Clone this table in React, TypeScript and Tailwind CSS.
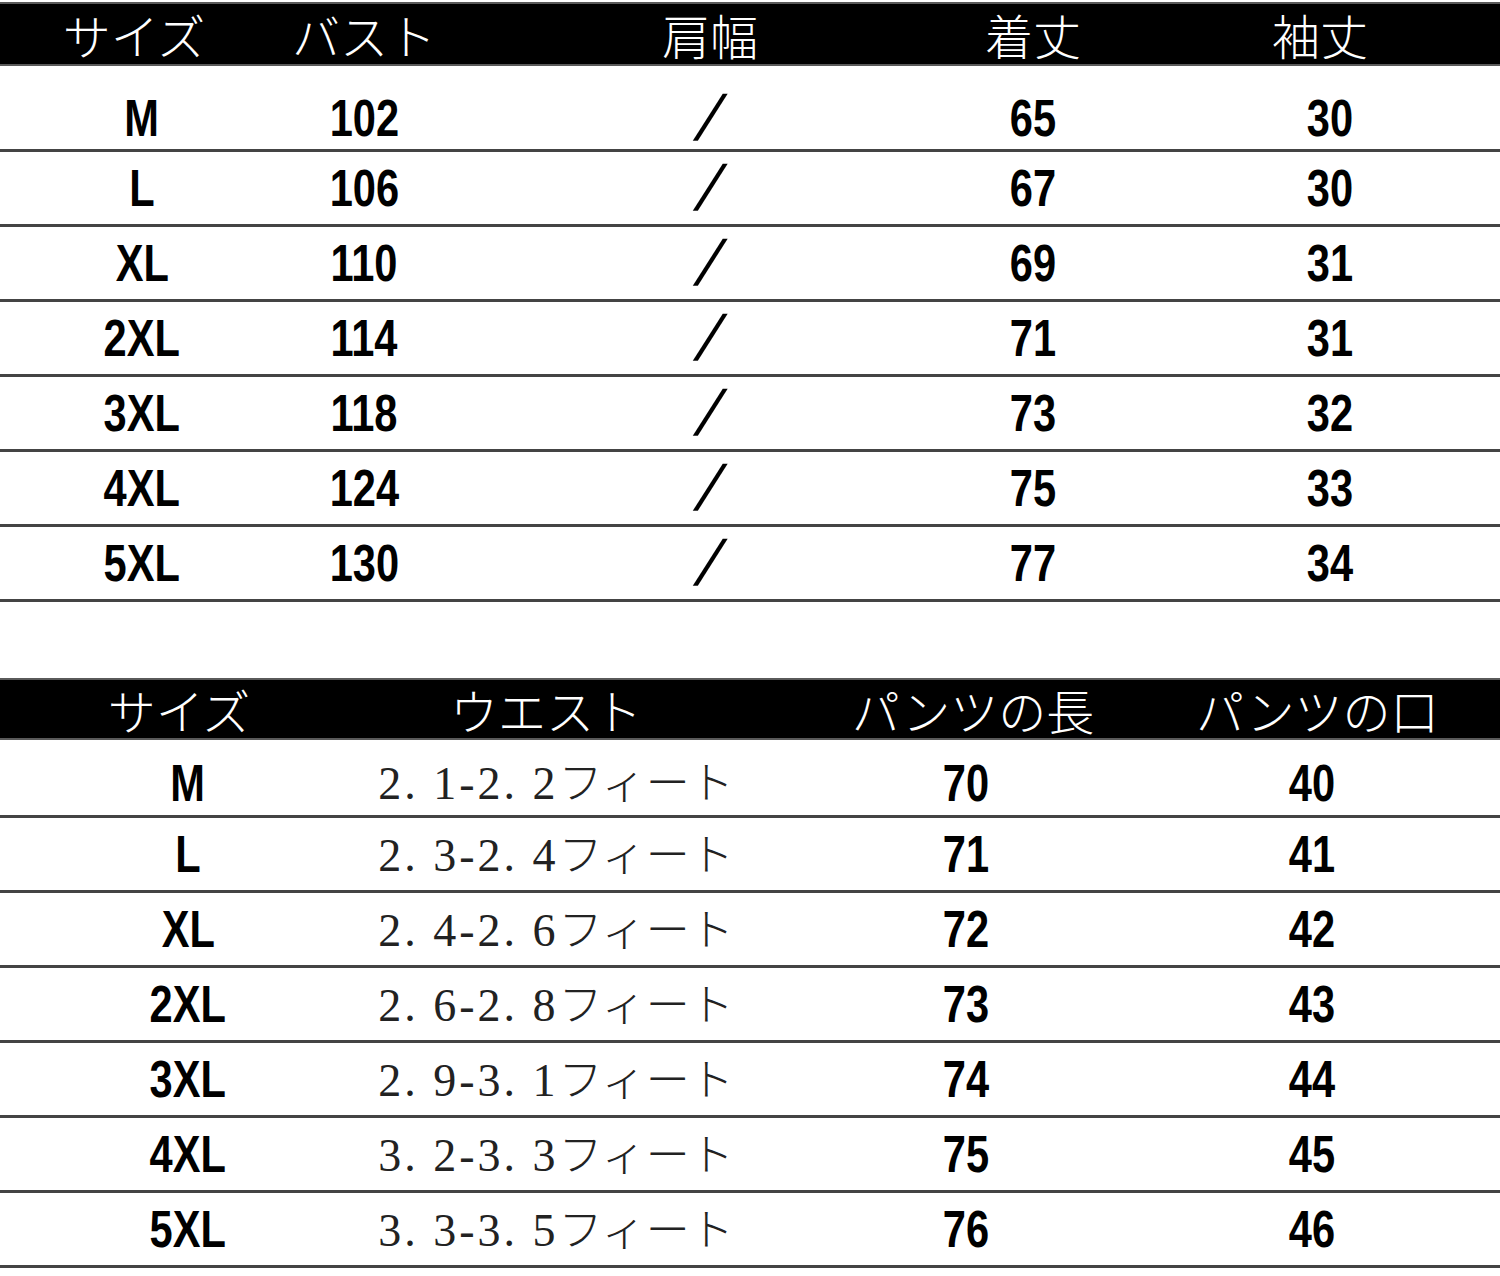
import React from 'react';

const tops = [
  { size: 'M', bust: '102', len: '65', sleeve: '30' },
  { size: 'L', bust: '106', len: '67', sleeve: '30' },
  { size: 'XL', bust: '110', len: '69', sleeve: '31' },
  { size: '2XL', bust: '114', len: '71', sleeve: '31' },
  { size: '3XL', bust: '118', len: '73', sleeve: '32' },
  { size: '4XL', bust: '124', len: '75', sleeve: '33' },
  { size: '5XL', bust: '130', len: '77', sleeve: '34' },
];

const pants = [
  { size: 'M', waist: '2. 1-2. 2', len: '70', hem: '40' },
  { size: 'L', waist: '2. 3-2. 4', len: '71', hem: '41' },
  { size: 'XL', waist: '2. 4-2. 6', len: '72', hem: '42' },
  { size: '2XL', waist: '2. 6-2. 8', len: '73', hem: '43' },
  { size: '3XL', waist: '2. 9-3. 1', len: '74', hem: '44' },
  { size: '4XL', waist: '3. 2-3. 3', len: '75', hem: '45' },
  { size: '5XL', waist: '3. 3-3. 5', len: '76', hem: '46' },
];

function Num({ children }: { children: React.ReactNode }) {
  return (
    <span className="inline-block scale-x-[0.8] font-['Liberation_Sans',sans-serif] text-[52px] font-bold leading-none text-black">
      {children}
    </span>
  );
}

const headCls = "whitespace-nowrap font-['Noto_Sans_CJK_JP',sans-serif] text-[48px] font-light leading-none text-white text-center";

export default function App() {
  return (
    <div className="w-[1500px] h-[1276px] bg-white overflow-hidden">
      {/* tops */}
      <div className="mt-[2px] grid h-[64px] grid-cols-[284px_160px_532px_114px_1fr] items-center border-y-2 border-[#5a5a5a] bg-black">
        <div className={headCls + ' pr-[16px]'}>サイズ</div>
        <div className={headCls}>バスト</div>
        <div className={headCls}>肩幅</div>
        <div className={headCls}>着丈</div>
        <div className={headCls + ' pl-[50px]'}>袖丈</div>
      </div>
      {tops.map((r, i) => (
        <div
          key={r.size}
          className={
            'grid grid-cols-[284px_160px_532px_114px_1fr] items-center border-b-[3px] border-[#444] text-center ' +
            (i === 0 ? 'h-[86px] pt-[20px]' : 'h-[75px]')
          }
        >
          <div><Num>{r.size}</Num></div>
          <div><Num>{r.bust}</Num></div>
          <div>
            <span className="inline-block -skew-x-[20deg] font-['Liberation_Sans',sans-serif] text-[64px] leading-none text-black">/</span>
          </div>
          <div><Num>{r.len}</Num></div>
          <div className="pl-[70px]"><Num>{r.sleeve}</Num></div>
        </div>
      ))}

      {/* pants */}
      <div className="mt-[76px] grid h-[62px] grid-cols-[376px_360px_460px_1fr] items-center border-y-2 border-[#5a5a5a] bg-black">
        <div className={headCls + ' pr-[18px]'}>サイズ</div>
        <div className={headCls + ' pr-[20px]'}>ウエスト</div>
        <div className={headCls + ' pl-[14px]'}>パンツの長</div>
        <div className={headCls + ' pr-[72px]'}>パンツの口</div>
      </div>
      {pants.map((r, i) => (
        <div
          key={r.size}
          className={
            'grid grid-cols-[376px_360px_460px_1fr] items-center border-b-[3px] border-[#444] text-center ' +
            (i === 0 ? 'h-[78px] pt-[10px]' : 'h-[75px]')
          }
        >
          <div><Num>{r.size}</Num></div>
          <div className="whitespace-nowrap leading-none text-[#222]">
            <span className="font-['Liberation_Serif',serif] text-[46px] tracking-[3px]">{r.waist}</span>
            <span className="font-['Noto_Sans_CJK_JP',sans-serif] text-[44px] font-light">フィート</span>
          </div>
          <div><Num>{r.len}</Num></div>
          <div className="pr-[72px]"><Num>{r.hem}</Num></div>
        </div>
      ))}
    </div>
  );
}
